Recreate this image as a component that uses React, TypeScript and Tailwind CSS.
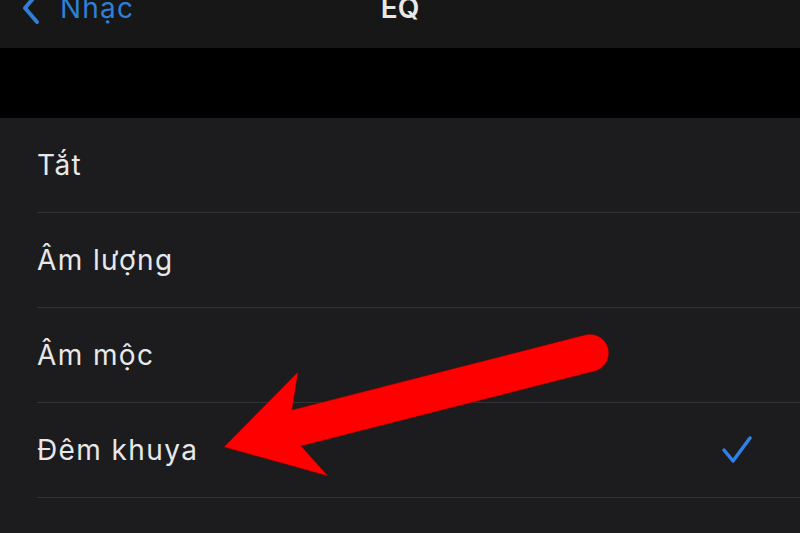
import React from 'react';

const options = [
  { label: 'Tắt', checked: false },
  { label: 'Âm lượng', checked: false },
  { label: 'Âm mộc', checked: false },
  { label: 'Đêm khuya', checked: true },
  { label: 'Điệu nhảy', checked: false },
];

const Check = () => (
  <svg width="30" height="28" viewBox="0 0 30 28" fill="none">
    <path d="M2 14 L11 25 L28 2" stroke="#2f80e8" strokeWidth="3.5" strokeLinecap="round" strokeLinejoin="round" />
  </svg>
);

const Arrow = () => (
  <svg className="absolute inset-0 pointer-events-none" width="800" height="533" viewBox="0 0 800 533">
    <path
      d="M224 447 L298 372 L292 410 L585 335 A18.5 18.5 0 0 1 595 371 L301 446 L328 476 Z"
      fill="#ff0000"
      stroke="#7a0000"
      strokeOpacity="0.4"
      strokeWidth="1"
      strokeLinejoin="round"
    />
  </svg>
);

const App: React.FC = () => {
  return (
    <div className="relative w-[800px] h-[533px] overflow-hidden bg-[#1c1c1e] font-['Inter','Liberation_Sans',sans-serif]">
      {/* nav bar, status bar cut off */}
      <div className="h-[48px] bg-[#171717] overflow-hidden">
        <div className="relative flex items-center h-[44px] -mt-[14px] px-[20px]">
          <div className="flex items-center text-[#2f7fd6]">
            <svg width="22" height="34" viewBox="0 0 22 34" fill="none">
              <path d="M17 3 L5 17 L17 31" stroke="#2f7fd6" strokeWidth="4" strokeLinecap="round" strokeLinejoin="round" />
            </svg>
            <span className="ml-[18px] text-[28px] tracking-[1.2px]">Nhạc</span>
          </div>
          <div className="absolute left-0 right-0 text-center text-[#e8e8e8] text-[28px] font-semibold pointer-events-none">EQ</div>
        </div>
      </div>

      <div className="h-[70px] bg-black" />

      <div className="flex flex-col">
        {options.map((o) => (
          <div key={o.label} className="pl-[37px]">
            <div className="flex items-center justify-between h-[95px] pr-[48px] border-b border-[#333335]">
              <span className="text-[28px] text-[#e8e8e8] tracking-[1.4px]">{o.label}</span>
              {o.checked && <Check />}
            </div>
          </div>
        ))}
      </div>

      <Arrow />
    </div>
  );
};

export default App;
